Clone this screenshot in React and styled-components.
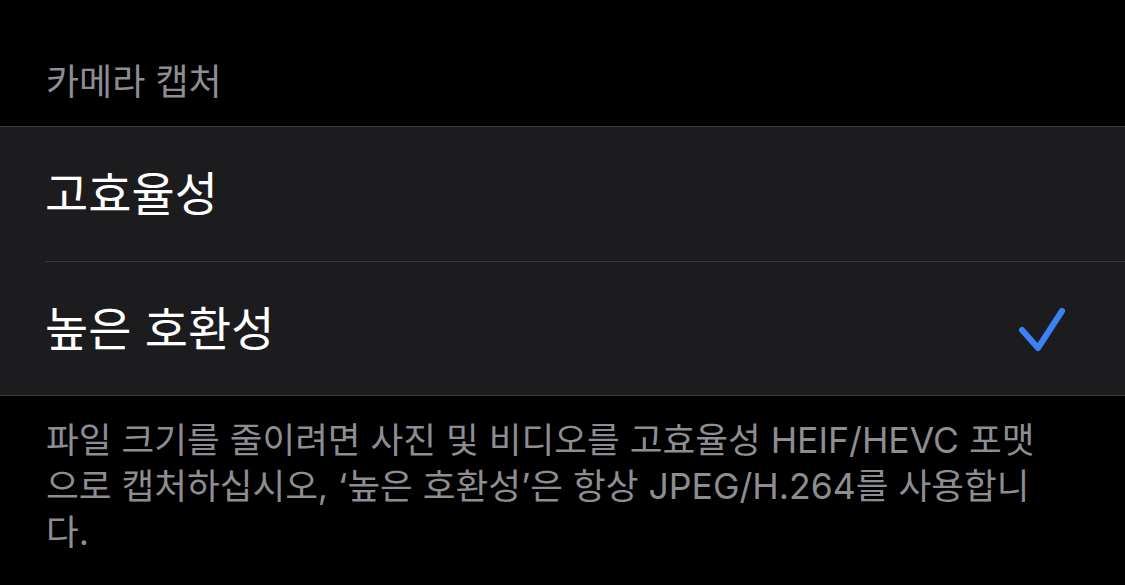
import styled, { createGlobalStyle } from "styled-components"

const Global = createGlobalStyle`
  html, body {
    margin: 0;
    padding: 0;
    background: #000;
  }
  body {
    font-family: "Inter", "Noto Sans CJK KR", sans-serif;
    -webkit-font-smoothing: antialiased;
  }
`

const Page = styled.div`
  width: 1125px;
  height: 585px;
  overflow: hidden;
  background: #000;
`

const SectionHeader = styled.div`
  height: 126px;
  box-sizing: border-box;
  padding: 58px 46px 0 46px;
  font-size: 36px;
  line-height: 48px;
  color: #8d8d92;
`

const Group = styled.div`
  background: #1c1c1e;
  border-top: 1px solid #38383a;
  border-bottom: 1px solid #38383a;
`

const Row = styled.div`
  display: flex;
  align-items: center;
  justify-content: space-between;
  height: 134px;
  margin-left: 45px;
  padding-right: 56px;
  box-sizing: border-box;
  border-top: ${p => (p.first ? "none" : "1px solid #38383a")};
`

const Label = styled.span`
  font-size: 47px;
  line-height: 56px;
  color: #fff;
`

const Check = () => (
  <svg width="54" height="50" viewBox="0 0 54 50">
    <path
      d="M7 26 L23 44 L47 7"
      fill="none"
      stroke="#3d82f5"
      strokeWidth="6"
      strokeLinecap="round"
      strokeLinejoin="round"
    />
  </svg>
)

const Footer = styled.p`
  margin: 0;
  width: 1000px;
  padding: 22px 0 0 46px;
  font-size: 35.6px;
  line-height: 46px;
  color: #8d8d92;
`

const options = [
  { label: "고효율성", selected: false },
  { label: "높은 호환성", selected: true },
]

export default function App() {
  return (
    <Page>
      <Global />
      <SectionHeader>카메라 캡처</SectionHeader>
      <Group>
        {options.map((o, i) => (
          <Row key={o.label} first={i === 0}>
            <Label>{o.label}</Label>
            {o.selected && <Check />}
          </Row>
        ))}
      </Group>
      <Footer>
        파일 크기를 줄이려면 사진 및 비디오를 고효율성 HEIF/HEVC 포맷으로 캡처하십시오, ‘높은 호환성’은 항상 JPEG/H.264를 사용합니다.
      </Footer>
    </Page>
  )
}
